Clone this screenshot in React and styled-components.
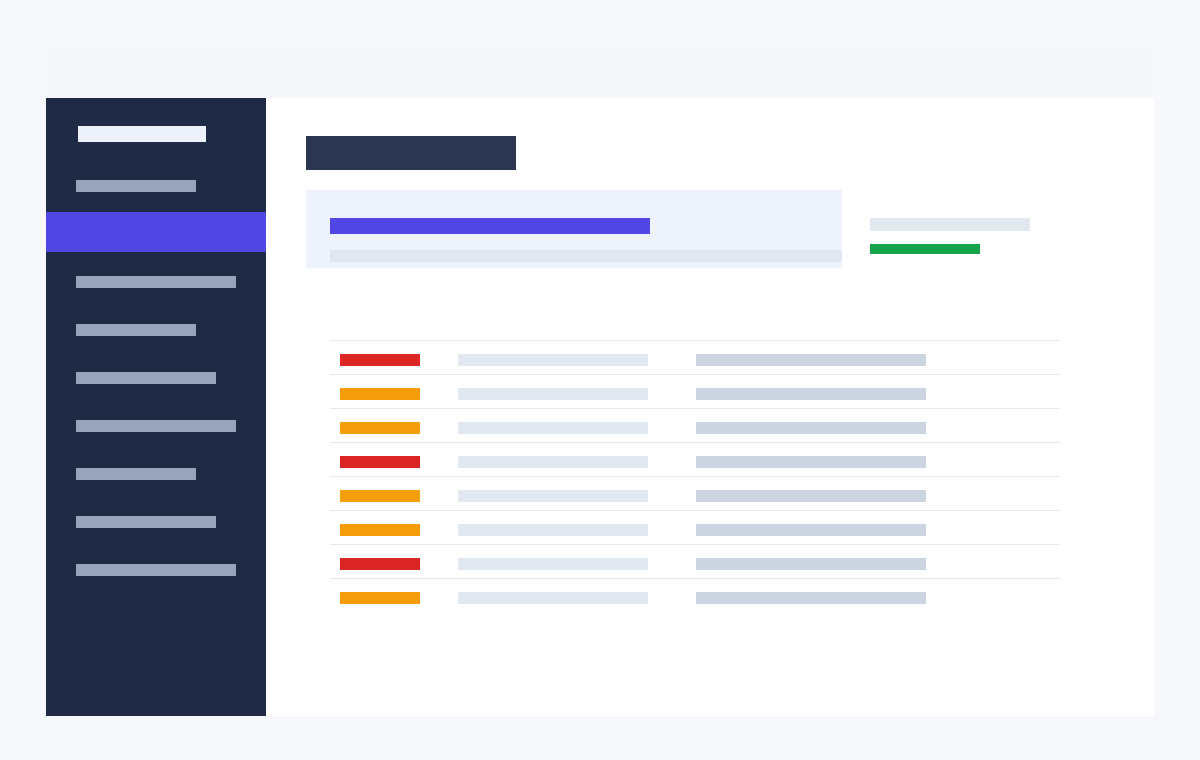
import React from "react";
import styled, { createGlobalStyle } from "styled-components";

const Global = createGlobalStyle`
  html, body { margin: 0; padding: 0; background: #f7f8fc; font-family: "Inter", "Liberation Sans", sans-serif; }
  * { box-sizing: border-box; }
`;

const Page = styled.div`
  width: 1200px;
  height: 760px;
  padding: 44px 46px;
  display: flex;
  flex-direction: column;
`;

const TopStrip = styled.div`
  height: 54px;
  background: #f5f7fb;
`;

const Frame = styled.div`
  flex: 1;
  display: flex;
  background: #ffffff;
`;

const Sidebar = styled.nav`
  width: 220px;
  background: #1f2a44;
  display: flex;
  flex-direction: column;
  padding-top: 28px;
`;

const Logo = styled.div`
  width: 128px;
  height: 16px;
  margin-left: 32px;
  background: #edf1fa;
`;

const NavBar = styled.div`
  width: ${(p) => p.$w}px;
  height: 12px;
  margin-left: 30px;
  margin-top: ${(p) => p.$mt}px;
  background: #98a4bc;
`;

const ActiveItem = styled.div`
  height: 40px;
  margin-top: 20px;
  background: #4f46e5;
`;

const Main = styled.main`
  flex: 1;
  padding: 38px 40px 0 40px;
  display: flex;
  flex-direction: column;
`;

const Title = styled.div`
  width: 210px;
  height: 34px;
  background: #2c3650;
`;

const SummaryRow = styled.div`
  display: flex;
  margin-top: 20px;
  gap: 28px;
`;

const HeroCard = styled.div`
  width: 536px;
  height: 78px;
  background: #eef2fd;
  padding: 28px 0 0 24px;
  display: flex;
  flex-direction: column;
`;

const HeroBar = styled.div`
  width: 320px;
  height: 16px;
  background: #5046e4;
`;

const HeroSub = styled.div`
  height: 12px;
  margin-top: 16px;
  background: #e2e8f0;
`;

const Stat = styled.div`
  padding-top: 28px;
  display: flex;
  flex-direction: column;
`;

const StatLabel = styled.div`
  width: 160px;
  height: 13px;
  background: #e2e8f0;
`;

const StatValue = styled.div`
  width: 110px;
  height: 10px;
  margin-top: 13px;
  background: #16a34a;
`;

const Table = styled.div`
  margin-top: 72px;
  margin-left: 24px;
  width: 730px;
  display: flex;
  flex-direction: column;
`;

const Row = styled.div`
  display: flex;
  align-items: flex-start;
  height: 34px;
  padding: 13px 10px 8px;
  border-top: 1px solid #e2e8f0;
`;

const Status = styled.div`
  width: 80px;
  height: 12px;
  background: ${(p) => (p.$level === "high" ? "#dc2626" : "#f59e0b")};
`;

const CellA = styled.div`
  width: 190px;
  height: 12px;
  margin-left: 38px;
  background: #e2e8f0;
`;

const CellB = styled.div`
  width: 230px;
  height: 12px;
  margin-left: 48px;
  background: #cbd5e1;
`;

const navWidths = [160, 120, 140, 160, 120, 140, 160];
const rows = ["high", "mid", "mid", "high", "mid", "mid", "high", "mid"];

export default function App() {
  return (
    <>
      <Global />
      <Page>
        <TopStrip />
        <Frame>
          <Sidebar>
            <Logo />
            <NavBar $w={120} $mt={38} />
            <ActiveItem />
            {navWidths.map((w, i) => (
              <NavBar key={i} $w={w} $mt={i === 0 ? 24 : 36} />
            ))}
          </Sidebar>
          <Main>
            <Title />
            <SummaryRow>
              <HeroCard>
                <HeroBar />
                <HeroSub />
              </HeroCard>
              <Stat>
                <StatLabel />
                <StatValue />
              </Stat>
            </SummaryRow>
            <Table>
              {rows.map((lvl, i) => (
                <Row key={i}>
                  <Status $level={lvl} />
                  <CellA />
                  <CellB />
                </Row>
              ))}
            </Table>
          </Main>
        </Frame>
      </Page>
    </>
  );
}
